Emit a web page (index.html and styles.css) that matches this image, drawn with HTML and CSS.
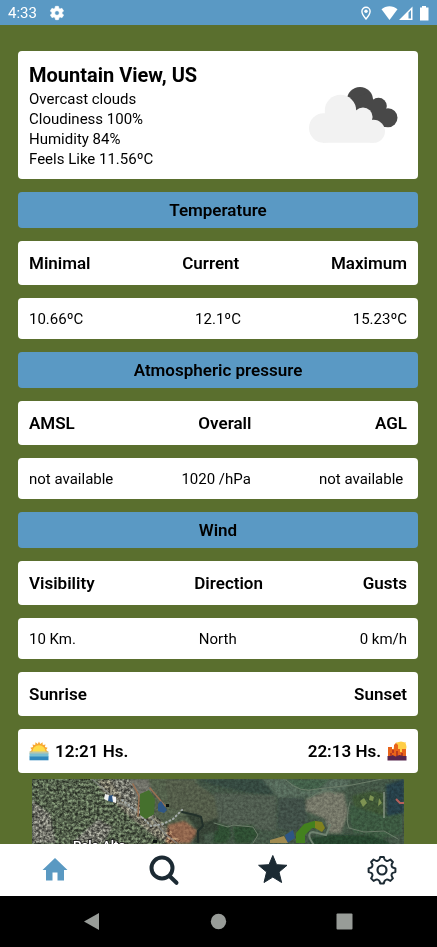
FILE: index.html
```html
<!DOCTYPE html>
<html lang="en">
<head>
<meta charset="utf-8">
<meta name="viewport" content="width=device-width, initial-scale=1">
<title>Weather</title>
<link rel="stylesheet" href="styles.css">
</head>
<body>
<div class="app">
  <header class="status">
    <span class="status-left">
      <time>4:33</time>
      <svg width="16" height="16" viewBox="0 0 24 24" aria-hidden="true"><path fill="#fff" stroke="#fff" d="M19.4 13c0-.3.1-.6.1-1s0-.7-.1-1l2.1-1.600c.2-.2.2-.4.1-.7l-2-3.400c-.1-.3-.4-.3-.6-.2l-2.500 1c-.5-.4-1.100-.7-1.700-1l-.4-2.600c0-.3-.2-.5-.5-.5h-4c-.2 0-.5.2-.5.5L9 5.100c-.6.3-1.100.6-1.700 1l-2.500-1c-.2-.1-.5 0-.6.2l-2 3.400c-.1.3-.1.5.1.7L4.500 11c0 .3-.1.600-.1 1s0 .7.100 1l-2.100 1.600c-.2.200-.2.400-.1.700l2 3.400c.1.300.4.300.6.200l2.500-1c.5.400 1.100.700 1.700 1l.4 2.600c0 .300.200.500.500.500h4c.3 0 .5-.2.500-.5l.4-2.600c.6-.3 1.100-.6 1.700-1l2.500 1c.2.100.5 0 .6-.2l2-3.400c.1-.3.1-.5-.1-.7zM12 15.500a3.500 3.500 0 1 1 0-7 3.500 3.500 0 0 1 0 7z"/></svg>
    </span>
    <svg class="status-icons" width="69" height="16" viewBox="360 4 69 16" aria-hidden="true">
      <path d="M366 6.200a4.100 4.100 0 0 1 4.100 4.100c0 3-4.100 7.700-4.100 7.700s-4.100-4.700-4.100-7.700a4.100 4.100 0 0 1 4.100-4.100z" fill="none" stroke="#fff" stroke-width="1.400"/>
      <circle cx="366" cy="10.300" r="1.700" fill="#fff"/>
      <path fill="#fff" d="M381.500 8.200c4.500-3.900 11.500-3.900 16 0l-8 10.800z"/>
      <path fill="#fff" fill-rule="evenodd" d="M399 19 412.500 5.500V19zM408.500 11.500V17.600H411V9z"/>
      <path fill="#fff" d="M422 5h4v1.500h2.500V19.500h-8.500V6.500h2z"/>
    </svg>
  </header>

  <main class="content">
    <section class="card summary">
      <div>
        <h1>Mountain View, US</h1>
        <p>Overcast clouds</p>
        <p>Cloudiness 100%</p>
        <p>Humidity 84%</p>
        <p>Feels Like 11.56ºC</p>
      </div>
      <svg width="96" height="64" viewBox="306 83 96 64" role="img" aria-label="Overcast clouds">
        <g fill="#484848"><circle cx="360" cy="100" r="13"/><circle cx="378.500" cy="106" r="8.300"/><circle cx="388" cy="117.800" r="9.500"/><path d="M350 100l17-7 18 18v16l-20-3z"/></g>
        <g fill="#f2f2f2"><circle cx="323.700" cy="128" r="14.700"/><circle cx="340.500" cy="110.500" r="15.700"/><circle cx="363" cy="117" r="9.600"/><circle cx="373.500" cy="131.300" r="11.500"/><path d="M325 110h25l20 10 4 22.800h-51z"/></g>
      </svg>
    </section>

    <h2 class="band">Temperature</h2>
    <div class="card row head"><span>Minimal</span><span>Current</span><span>Maximum</span></div>
    <div class="card row values"><span>10.66ºC</span><span>12.1ºC</span><span>15.23ºC</span></div>

    <h2 class="band">Atmospheric pressure</h2>
    <div class="card row head"><span>AMSL</span><span>Overall</span><span>AGL</span></div>
    <div class="card row values"><span>not available</span><span>1020 /hPa</span><span>not available&nbsp;</span></div>

    <h2 class="band">Wind</h2>
    <div class="card row head"><span>Visibility</span><span>Direction</span><span>Gusts</span></div>
    <div class="card row values"><span>10 Km.</span><span>North</span><span>0 km/h</span></div>

    <div class="card row head"><span>Sunrise</span><span>Sunset</span></div>
    <div class="card row head">
      <span class="sun">
        <svg width="20" height="20" viewBox="0 0 20 20" aria-hidden="true">
          <path fill="#f8a832" d="M10 .5l1.200 2.400 2.300-1.600.3 2.700 2.700-.5-.6 2.600 2.700.6-1.500 2.200 2.300 2.100H.6l2.300-2.100L1.400 6.700l2.700-.6-.6-2.600 2.700.5.3-2.700 2.300 1.600z"/>
          <path fill="#ffdc48" d="M3.300 11a6.700 6.700 0 0 1 13.400 0z"/>
          <path fill="#b9c6aa" d="M.5 10.500h19V13H.5z"/><path fill="#79bfd2" d="M.5 12.500h19V16H.5z"/><path fill="#3188bd" d="M.5 15.500h19v3.800H.5z"/>
        </svg>
        12:21 Hs.
      </span>
      <span class="sun">
        22:13 Hs.
        <svg width="20" height="20" viewBox="0 0 20 20" aria-hidden="true">
          <path fill="#ffe39a" d="M9 1h10v9H5z"/>
          <circle cx="14" cy="6" r="5.500" fill="#ffce45"/>
          <path fill="#e8641b" d="M1 6h4v2h2V4l2-2 2 2v4h2v3h2V8h4v8H1z"/>
          <path fill="#b83b20" d="M5 9h2v3H5zM9 10h2v5H9zM3 12h2v3H3zM14 12h2v3h-2z"/>
          <path fill="#57264f" d="M.5 15h4l1-1 3 1.500 4-1.500 3 1h4v4.500H.5z"/>
        </svg>
      </span>
    </div>

    <svg class="map" viewBox="32 779 372 80" preserveAspectRatio="xMidYMin slice" role="img" aria-label="Satellite map of Palo Alto">
      <defs>
        <filter id="grain" x="0" y="0" width="100%" height="100%" color-interpolation-filters="sRGB">
          <feTurbulence type="fractalNoise" baseFrequency=".37" numOctaves="4" seed="11"/>
          <feColorMatrix values="1.900 0 0 0 -.45  1.900 0 0 0 -.45  1.900 0 0 0 -.45  0 0 0 0 1"/>
        </filter>
        <filter id="haze"><feGaussianBlur stdDeviation=".8"/></filter>
        <clipPath id="town"><path d="M32 779h98l6 20 26 22 20 22v16H32z"/></clipPath>
      </defs>
      <path fill="#435646" d="M32 779h372v80H32z"/>
      <g filter="url(#haze)">
        <path fill="#52604c" d="M32 779h165l-8 80H32z"/>
        <path fill="#6f6e61" d="M98 779h32l8 25 24 18 14 21-18-4-28-22-30-28z"/>
        <path fill="#6f7168" d="M72 843l26-24 14 8-8 16zM32 800l18 14 6 29H32zM110 779h38l4 12-14 8-4 18z"/>
        <path fill="#525b49" d="M165 779h25l32 22-4 24h-20l-8-12-20-5z"/>
        <path fill="#34483f" d="M197 779h70l12 16-30-2-35-8z"/>
        <path fill="#505b4f" d="M214 793l62 3v35l-45-5-12-3z"/>
        <path fill="#3f5046" d="M278 798l26-1 5 30-14 5-18-3z"/>
        <path fill="#55695a" d="M262 779h88l-4 10-32 7-36 2z"/>
        <path fill="#425f48" d="M285 779h45l-12 11-16 1z"/>
        <path fill="#757767" d="M306 799l20-7 18 1 4 20-7 20h-12l-4-14-19-8z"/>
        <path fill="#2d4d30" d="M217 823l12 3 2 10-5 7h-13zM233 826l20-1 5 10-8 8h-15z"/>
        <path fill="#25442d" d="M310 838l20-3h45l15 8v16h-80z"/>
        <path fill="#3b5840" d="M350 805l32 9 20-4v24l-22 5-13-5-14-1-4-16z"/>
        <path fill="#3d5534" d="M352 796l20-5 12 2v23l-30-10z"/>
        <path fill="#253f48" d="M386 785l18-6v34l-17 3z"/>
        <path fill="#91664d" d="M168 825l16-4 14 10-8 12h-24z"/>
        <path fill="#344234" d="M184 813l15 2 4 8 15-6v14l-15 3 2 9h-12l4-15z"/>
      </g>
      <path class="noise soft" filter="url(#grain)" d="M32 779h372v80H32z"/>
      <g class="noise" clip-path="url(#town)"><path filter="url(#grain)" d="M32 779h172v80H32z"/></g>
      <g fill="none" stroke-linecap="round">
        <path stroke="#8f938e" stroke-width="1.500" opacity=".7" d="M92 779l28 24 29 12 16 19 12 9"/>
        <path stroke="#a4aba8" stroke-width="2" stroke-dasharray="1 3" d="M142 817l9 9 12-2 10-5 10-10M122 800l20 15"/>
        <path stroke="#9a7052" stroke-width="1.500" d="M133 784l6 12-1 20M150 788l15 18"/>
        <path stroke="#22302a" stroke-width="2" d="M182 812l13 3 6 2 2 9-5 5v11"/>
        <path stroke="#6c7d6a" d="M214 823l14 4 5-2 20 2 5 8-5 8M286 780q14 14 31 9l35-4 35-7M308 799q18-14 28-5M350 802q-5 17-1 26l15 4 20-1 14 8"/>
        <path stroke="#6f8270" stroke-width="2" d="M314 845q-9-12-1-13l13 3 4-10"/>
      </g>
      <path fill="#45702d" d="M140 794l9-4 6 9-1 15-8 5-6-4z"/>
      <path fill="#2e5684" d="M158 804l3-3 6 9-3 3-6-2zM108 796l5-1v7l-5-1zM285 835l8-5 2 8-8 5z"/>
      <path fill="#a08b50" d="M270 840l14-4 4 7h-18z"/>
      <path fill="#43811e" d="M296 833l8-9 10-3 8 1v7l-10-1-7 7v8h-9z"/><path fill="#80811f" d="M315 821l7 1 3 6-3 4-7-4z"/>
      <path fill="#fff" opacity=".9" d="M105 794l4 1-1 6-4-2zM112 796l4 1v6l-3-1z"/>
      <path fill="#0b1210" d="M166 804h3v3h-3zM153 840h4v3h-4z"/>
      <path fill="#7e9352" d="M360 801l4-3 3 5-4 4zM370 795l4 2-1 4-4-1zM379 798l3 5-4 3z"/>
      <path fill="none" stroke="#a6b2a3" d="M384 792v26"/>
      <path fill="none" stroke="#b7605a" stroke-width="2" d="M396 799l4 4h4"/>
      <text class="place" x="73" y="850">Palo Alto</text>
    </svg>
  </main>

  <nav class="tabs">
    <button type="button" aria-label="Home"><svg width="32" height="32" viewBox="0 0 32 32"><path fill="#5a99c2" d="M16 4 28.500 16H25v10.500h-6.500v-8h-5v8H7V16H3.500z"/></svg></button>
    <button type="button" aria-label="Search"><svg width="32" height="32" viewBox="0 0 32 32"><circle cx="14" cy="14" r="10.500" fill="none" stroke="#1c2a33" stroke-width="4"/><path d="M21.500 22l7 6.800" stroke="#1c2a33" stroke-width="4" stroke-linecap="round"/></svg></button>
    <button type="button" aria-label="Favorites"><svg width="32" height="32" viewBox="0 0 32 32"><path fill="#1c2a33" stroke="#1c2a33" stroke-linejoin="round" d="M15.800 1.500l3.800 9.200 10.400.6-8 6.700 2.600 10.500-8.800-5.400L7 28.500 9.600 18l-8-6.700 10.400-.6z"/></svg></button>
    <button type="button" aria-label="Settings"><svg width="32" height="32" viewBox="0 0 32 32" fill="none" stroke="#1c2a33" stroke-width="2" stroke-linejoin="round"><circle cx="16" cy="16" r="4.500" stroke-width="2.200"/><path d="M13.600 5 14.200 3h3.600l.6 2q.5 1.400 1.900 1.800 1.200.4 2.300-.3l1.800-1 2.500 2.500-1 1.900q-.7 1.100-.2 2.300.4 1.200 1.700 1.600l2 .6v3.600l-2 .6q-1.300.4-1.700 1.600-.5 1.200.2 2.300l1 1.900-2.500 2.500-1.800-1q-1.100-.7-2.300-.3-1.400.400-1.900 1.800l-.6 2h-3.600l-.6-2q-.5-1.400-1.900-1.800-1.200-.4-2.300.3l-1.800 1-2.500-2.500 1-1.900q.7-1.100.200-2.300-.4-1.200-1.700-1.600l-2-.6v-3.600l2-.6q1.300-.4 1.700-1.600.5-1.200-.2-2.300l-1-1.900 2.500-2.500 1.800 1q1.100.7 2.300.3Q13.100 6.400 13.600 5z"/></svg></button>
  </nav>

  <div class="system">
    <button type="button" aria-label="Back"><svg width="20" height="20" viewBox="0 0 20 20"><path fill="#989c98" d="M16 1v17L1 9.500z"/></svg></button>
    <button type="button" aria-label="Home screen"><svg width="20" height="20" viewBox="0 0 20 20"><circle cx="9.500" cy="9.500" r="7.700" fill="#989c98"/></svg></button>
    <button type="button" aria-label="Recent apps"><svg width="20" height="20" viewBox="0 0 20 20"><rect x="1.500" y="1.500" width="16" height="16" rx="1" fill="#989c98"/></svg></button>
  </div>
</div>
</body>
</html>
```
FILE: styles.css
```css
* {
  box-sizing: border-box;
  margin: 0;
}

body {
  font-family: Roboto, "Liberation Sans", sans-serif;
  font-size: 15px;
  line-height: 20px;
  color: #000;
}

button {
  border: 0;
  padding: 0;
  background: none;
}

svg {
  display: block;
  flex: none;
}

.app {
  display: flex;
  flex-direction: column;
  height: 100vh;
  background: #5a6f2e;
}

.status {
  display: flex;
  align-items: center;
  justify-content: space-between;
  height: 25px;
  flex: none;
  padding: 0 8px;
  background: #5a99c4;
  color: #fff;
}

.status-left {
  display: flex;
  align-items: center;
  gap: 12px;
}

.content {
  display: flex;
  flex-direction: column;
  gap: 13px;
  flex: 1;
  min-height: 0;
  overflow: hidden;
  padding: 26px 19px 0 18px;
}

.content > * {
  flex: none;
}

.card {
  display: flex;
  align-items: center;
  justify-content: space-between;
  padding: 0 11px;
  border-radius: 4px;
  background: #fff;
}

.summary {
  height: 128px;
  padding-right: 16px;
}

h1 {
  font-size: 20px;
  font-weight: 700;
  line-height: 28px;
}

.band {
  height: 36px;
  border-radius: 4px;
  background: #5a99c4;
  font-size: 17px;
  font-weight: 600;
  line-height: 36px;
  text-align: center;
}

.head {
  height: 44px;
  font-size: 17px;
  font-weight: 600;
}

.values {
  height: 41px;
}

.sun {
  display: flex;
  align-items: center;
  gap: 6px;
}

.map {
  width: calc(100% - 28px);
  height: 80px;
  margin: -7px 14px 0;
}

.noise {
  mix-blend-mode: overlay;
  opacity: 0.45;
}

.soft {
  opacity: 0.15;
}

.place {
  font-size: 13px;
  font-weight: 500;
  fill: #fff;
  stroke: #222;
  stroke-width: 2px;
  paint-order: stroke;
}

.tabs {
  display: grid;
  grid-template-columns: repeat(4, 1fr);
  flex: none;
  height: 52px;
  background: #fff;
}

.tabs button,
.system button {
  display: grid;
  place-items: center;
}

.system {
  display: flex;
  justify-content: center;
  gap: 106px;
  flex: none;
  height: 51px;
  background: #000;
}
```
